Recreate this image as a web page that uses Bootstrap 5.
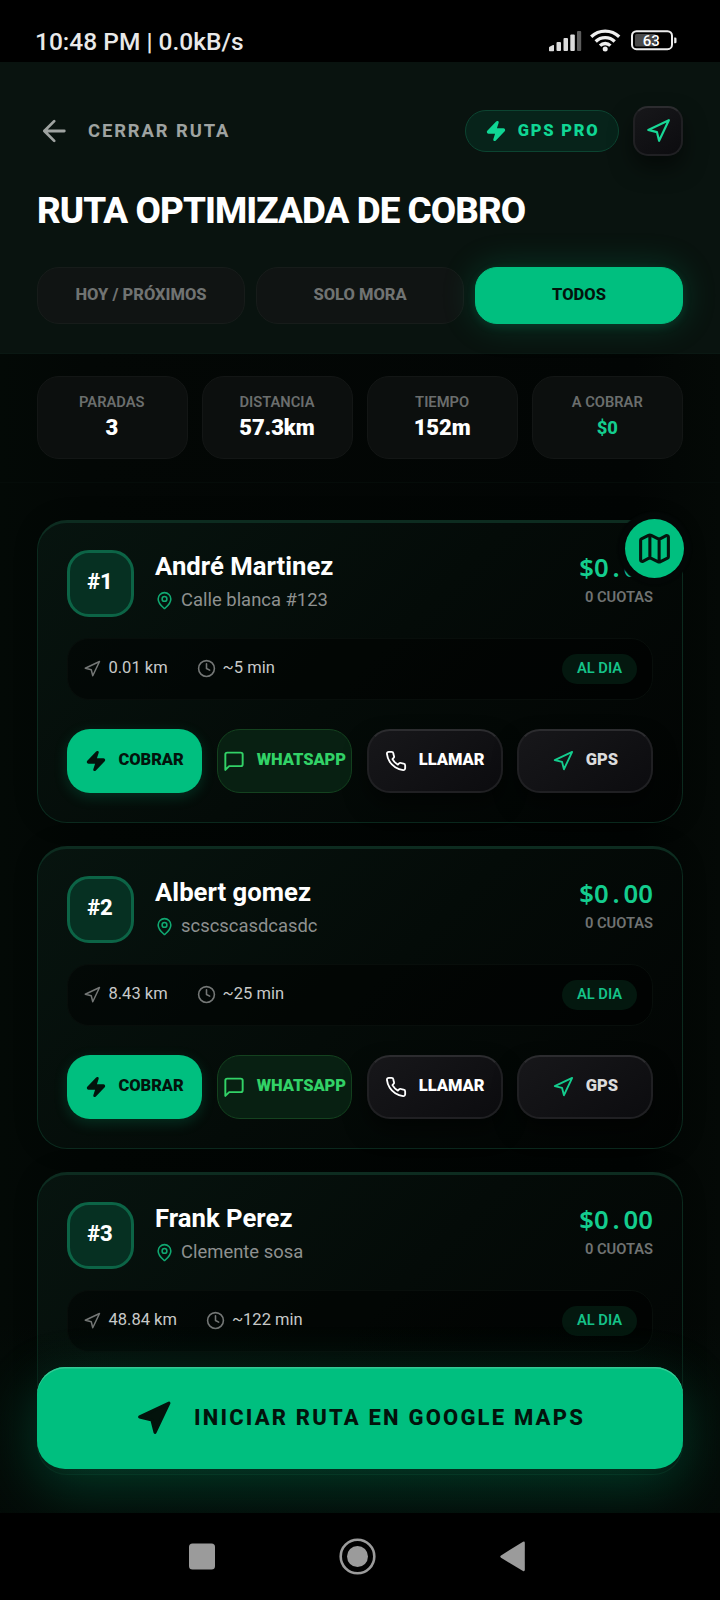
<!DOCTYPE html>
<html lang="es">
<head>
<meta charset="utf-8">
<meta name="viewport" content="width=device-width, initial-scale=1">
<title>Ruta optimizada de cobro</title>
<link rel="stylesheet" href="https://cdn.jsdelivr.net/npm/bootstrap@5.3.0/dist/css/bootstrap.min.css">
<style>
:root{--em:#00bf7f;--em-l:#14cd8e}
html,body{height:1600px}
body{background:#000;color:#fff;font-family:Roboto,"Liberation Sans",sans-serif;line-height:1;overflow:hidden}
svg{display:block;flex:none}
.ico{fill:none;stroke:currentColor;stroke-width:2;stroke-linecap:round;stroke-linejoin:round}
.ico-solid{fill:currentColor}
.statusbar{height:62px;padding:26px 43px 0 35px;font-size:24.5px;font-weight:500;color:#e9e9e9}
.screen{background:linear-gradient(90deg,#030906,#030705 12%,#020504 88%,#040906)}
.route-head{height:292px;padding:44px 37px 0;background:#09130f;border-bottom:1px solid #0a1813}
.back-link{font-size:18.4px;font-weight:700;letter-spacing:1.9px;color:#9fa3a1;padding-left:2px;gap:19px}
.gps-pill{height:42px;width:154px;border:1px solid #0c4431;background:#07231a;color:#10d694;font-size:16.5px;font-weight:900;letter-spacing:1.75px;gap:11px}
.dark-btn{background:linear-gradient(145deg,#17171a,#0c0c0f);border:2px solid #202023;border-top-color:#2c2c2f;box-shadow:0 12px 22px rgba(0,0,0,.5)}
.nav-square{width:50px;height:50px;border-radius:15px;color:#18d796}
.page-title{font-size:36.8px;font-weight:800;letter-spacing:-.93px;margin:33px 0 0;line-height:44px}
.filters{gap:11px;margin-top:34px}
.filter-tab{height:57px;flex:1 1 0;border-radius:22px;border:1px solid #171c1a;background:#101413;color:#707372;font-size:16.5px;font-weight:800;padding-bottom:1px}
.filter-tab.is-on{background:var(--em);border-color:var(--em);color:#03130c;box-shadow:0 0 34px rgba(0,191,127,.22),0 3px 10px rgba(0,191,127,.14)}
.stats{height:129px;padding:22px 37px 0;gap:14.6px;border-bottom:1px solid #050c09}
.stat{height:83px;flex:1 1 0;border-radius:22px;border:1px solid #131615;background:#0c0f0e;padding:17px 1px 0 0}
.stat-label{font-size:14.7px;font-weight:600;color:#6b6e6d;line-height:16px}
.stat-value{font-size:22px;font-weight:900;letter-spacing:-.1px;line-height:26px;margin-top:5px}
.stops{padding:37px 37px 0;gap:23px}
.stop{height:303px;flex:none;border-radius:30px;border:1.5px solid #0b2a1e;border-top:3px solid #0d2c20;background:linear-gradient(135deg,#07140f 0%,#040b08 50%,#020403 100%);padding:27px 29px 0 28.5px;box-shadow:0 0 24px rgba(0,0,0,.2)}
.stop-no{width:67px;height:67px;border-radius:22px;border:3px solid #0c6446;background:#063022;font-size:22px;font-weight:800;padding-bottom:3px}
.stop-name{font-size:25.7px;font-weight:700;line-height:30px;margin-top:1px}
.stop-addr{font-size:18.4px;line-height:24px;color:#8e9190;gap:7px;margin-top:7px}
.stop-addr svg{color:#10a871}
.amount{font-family:"Noto Sans","Open Sans",sans-serif;font-weight:600;font-size:25.7px;line-height:30px;color:var(--em-l);margin-top:3px}
.amount .dot{padding:0 .152em}
.quotas{font-size:14.7px;font-weight:600;line-height:16px;color:#707372;margin-top:6px}
.stop-top{height:67px}
.meta{height:62px;margin-top:21px;border-radius:22px;border:1px solid #080e0b;background:rgba(0,0,0,.45);padding:0 15px 1px 15px;font-size:16.5px;color:#c8cac9}
.meta svg{color:#747776}
.meta .dur{margin-left:29px;gap:7px}
.state-pill{width:75px;height:30px;border-radius:15px;background:#04180f;color:#15c288;font-size:14.7px;font-weight:600;padding-bottom:1px}
.actions{gap:14.6px;margin-top:29px}
.act{height:64px;flex:0 0 calc((100% - 43.8px)/4);border-radius:23px;font-size:16.5px;font-weight:900;letter-spacing:-.05px;gap:11.5px;white-space:nowrap;padding-bottom:1px}
.act-pay{background:var(--em);color:#03130c;box-shadow:0 4px 14px rgba(0,191,127,.2)}
.act-wa{background:#082012;border:1px solid #14421f;color:#32d267}
.map-fab{top:165px;right:36.500px;width:59px;height:59px;background:var(--em);color:#04140d;box-shadow:0 0 1px 7.500px #030706;margin-top:292px}
.cta-wrap{left:0;right:0;bottom:0;height:190px;padding:44px 37px;background:linear-gradient(180deg,rgba(4,12,9,0),rgba(4,14,10,.5) 40%,rgba(4,12,9,.6))}
.cta{height:102px;border-radius:28px;background:var(--em);color:#03130c;font-size:22px;font-weight:800;letter-spacing:2.2px;gap:22px;box-shadow:0 18px 55px rgba(0,191,127,.27),inset 0 1.5px 0 #35c995}
.sysnav{height:87px}
</style>
</head>
<body class="d-flex flex-column">
<svg width="0" height="0" class="position-absolute" aria-hidden="true">
  <symbol id="nav" viewBox="0 0 24 24"><polygon points="3 11 22 2 13 21 11 13 3 11"/></symbol>
  <symbol id="zap" viewBox="0 0 24 24"><path d="M4 14a1 1 0 0 1-.78-1.63l9.9-10.2a.5.5 0 0 1 .86.46l-1.92 6.02A1 1 0 0 0 13 10h7a1 1 0 0 1 .78 1.63l-9.9 10.2a.5.5 0 0 1-.86-.46l1.92-6.02A1 1 0 0 0 11 14z"/></symbol>
  <symbol id="pin" viewBox="0 0 24 24"><path d="M20 10c0 5-5.5 10.200-7.400 11.800a1 1 0 0 1-1.200 0C9.500 20.200 4 15 4 10a8 8 0 0 1 16 0"/><circle cx="12" cy="10" r="3"/></symbol>
  <symbol id="clock" viewBox="0 0 24 24"><circle cx="12" cy="12" r="10"/><path d="M12 6v6l4 2"/></symbol>
  <symbol id="msg" viewBox="0 0 24 24"><path d="M21 15a2 2 0 0 1-2 2H7l-4 4V5a2 2 0 0 1 2-2h14a2 2 0 0 1 2 2z" transform="translate(-.6 -.3) scale(1.05)"/></symbol>
  <symbol id="phone" viewBox="0 0 24 24"><path d="M22 16.920v3a2 2 0 0 1-2.180 2 19.790 19.790 0 0 1-8.630-3.070 19.500 19.500 0 0 1-6-6 19.790 19.790 0 0 1-3.070-8.670A2 2 0 0 1 4.110 2h3a2 2 0 0 1 2 1.720 12.840 12.840 0 0 0 .7 2.810 2 2 0 0 1-.45 2.110L8.090 9.910a16 16 0 0 0 6 6l1.270-1.270a2 2 0 0 1 2.110-.45 12.840 12.840 0 0 0 2.810.7A2 2 0 0 1 22 16.920z"/></symbol>
  <symbol id="map" viewBox="0 0 24 24"><path d="M14.106 5.553a2 2 0 0 0 1.788 0l3.659-1.830A1 1 0 0 1 21 4.619v12.764a1 1 0 0 1-.553.894l-4.553 2.277a2 2 0 0 1-1.788 0l-4.212-2.106a2 2 0 0 0-1.788 0l-3.659 1.830A1 1 0 0 1 3 19.381V6.618a1 1 0 0 1 .553-.894l4.553-2.277a2 2 0 0 1 1.788 0zM15 5.764v15M9 3.236v15"/></symbol>
</svg>

<header class="statusbar d-flex justify-content-between flex-shrink-0">
  <span class="mt-1 text-nowrap">10:48 PM | 0.0kB/s</span>
  <svg width="129" height="28" viewBox="548 26 129 28">
    <g fill="#dcdcdc"><path d="M549 51v-3.500q0-.6 1-1l3-1.500q1-.3 1 .6v5q0 .6-.6.6h-3.800q-.6 0-.6-.6z"/><rect x="556.500" y="42" width="4.500" height="9" rx="1"/><rect x="563.500" y="38" width="4.500" height="13" rx="1"/><rect x="570.300" y="34.500" width="4.500" height="16.500" rx="1"/><rect x="577" y="31" width="4.200" height="20" rx="1" fill="#5d5d5d"/></g>
    <g fill="none" stroke="#f0f0f0" stroke-width="3.300"><path d="M591.200 36.800a20 20 0 0 1 28 0"/><path d="M595.700 41.500a13.500 13.500 0 0 1 19 0"/><path d="M600 45.600a7.500 7.500 0 0 1 10.400 0"/></g>
    <circle cx="605.200" cy="49" r="2.500" fill="#f0f0f0"/>
    <rect x="632" y="31.200" width="40" height="18" rx="4.500" fill="none" stroke="#ececec" stroke-width="2"/>
    <rect x="635" y="34" width="21" height="12.500" rx="1.500" fill="#4a4a4a"/><path d="M674.200 37.500h1q1.300 0 1.300 1.300v3.200q0 1.300-1.300 1.300h-1z" fill="#ececec"/>
    <text x="651.300" y="45.700" text-anchor="middle" font-size="15" font-weight="500" fill="#fff">63</text>
  </svg>
</header>

<main class="screen flex-grow-1 position-relative overflow-hidden d-flex flex-column">
  <section class="route-head flex-shrink-0">
    <div class="d-flex align-items-center justify-content-between">
      <a class="back-link d-flex align-items-center text-decoration-none">
        <svg width="30" height="30" viewBox="0 0 24 24" class="ico"><path d="m11.500 2.700-9.300 9.300 9.300 9.300M21 12H2.200" transform="translate(2.400 1.800) scale(.85)" stroke-width="2.600"/></svg>
        <span>CERRAR RUTA</span>
      </a>
      <div class="d-flex align-items-center" style="gap:14px">
        <span class="gps-pill rounded-pill d-flex align-items-center justify-content-center"><svg width="22" height="22" class="ico ico-solid"><use href="#zap"/></svg><span>GPS PRO</span></span>
        <button class="nav-square dark-btn d-flex align-items-center justify-content-center p-0"><svg width="26" height="26" class="ico"><use href="#nav"/></svg></button>
      </div>
    </div>
    <h1 class="page-title text-nowrap">RUTA OPTIMIZADA DE COBRO</h1>
    <div class="filters d-flex">
      <div class="filter-tab d-flex align-items-center justify-content-center">HOY / PRÓXIMOS</div>
      <div class="filter-tab d-flex align-items-center justify-content-center">SOLO MORA</div>
      <div class="filter-tab is-on d-flex align-items-center justify-content-center">TODOS</div>
    </div>
  </section>

  <section class="stats d-flex flex-shrink-0 text-center">
    <div class="stat"><div class="stat-label">PARADAS</div><div class="stat-value">3</div></div>
    <div class="stat"><div class="stat-label">DISTANCIA</div><div class="stat-value">57.3km</div></div>
    <div class="stat"><div class="stat-label">TIEMPO</div><div class="stat-value">152m</div></div>
    <div class="stat"><div class="stat-label">A COBRAR</div><div class="stat-value" style="font-size:18.4px;font-weight:800;color:var(--em-l)">$0</div></div>
  </section>

  <section class="stops d-flex flex-column">
    <article class="stop">
      <div class="stop-top d-flex">
        <div class="stop-no d-flex align-items-center justify-content-center">#1</div>
        <div class="flex-grow-1" style="padding-left:21.600px">
          <div class="stop-name">André Martinez</div>
          <div class="stop-addr d-flex align-items-center"><svg width="19" height="19" class="ico"><use href="#pin"/></svg><span>Calle blanca #123</span></div>
        </div>
        <div class="text-end"><div class="amount">$0<span class="dot">.</span>00</div><div class="quotas">0 CUOTAS</div></div>
      </div>
      <div class="meta d-flex align-items-center">
        <svg width="18" height="18" class="ico me-2"><use href="#nav"/></svg><span>0.01 km</span>
        <span class="dur d-flex align-items-center"><svg width="19" height="19" class="ico"><use href="#clock"/></svg><span>~5 min</span></span>
        <span class="state-pill ms-auto d-flex align-items-center justify-content-center">AL DIA</span>
      </div>
      <div class="actions d-flex">
        <div class="act act-pay d-flex align-items-center justify-content-center"><svg width="22" height="22" class="ico ico-solid"><use href="#zap"/></svg>COBRAR</div>
        <div class="act act-wa d-flex align-items-center justify-content-center"><svg width="22" height="22" class="ico"><use href="#msg"/></svg>WHATSAPP</div>
        <div class="act dark-btn d-flex align-items-center justify-content-center"><svg width="22" height="22" class="ico"><use href="#phone"/></svg>LLAMAR</div>
        <div class="act dark-btn d-flex align-items-center justify-content-center"><svg width="22" height="22" class="ico" color="#14cd8e"><use href="#nav"/></svg><span style="color:#dcdcdc">GPS</span></div>
      </div>
    </article>

    <article class="stop">
      <div class="stop-top d-flex">
        <div class="stop-no d-flex align-items-center justify-content-center">#2</div>
        <div class="flex-grow-1" style="padding-left:21.600px">
          <div class="stop-name">Albert gomez</div>
          <div class="stop-addr d-flex align-items-center"><svg width="19" height="19" class="ico"><use href="#pin"/></svg><span>scscscasdcasdc</span></div>
        </div>
        <div class="text-end"><div class="amount">$0<span class="dot">.</span>00</div><div class="quotas">0 CUOTAS</div></div>
      </div>
      <div class="meta d-flex align-items-center">
        <svg width="18" height="18" class="ico me-2"><use href="#nav"/></svg><span>8.43 km</span>
        <span class="dur d-flex align-items-center"><svg width="19" height="19" class="ico"><use href="#clock"/></svg><span>~25 min</span></span>
        <span class="state-pill ms-auto d-flex align-items-center justify-content-center">AL DIA</span>
      </div>
      <div class="actions d-flex">
        <div class="act act-pay d-flex align-items-center justify-content-center"><svg width="22" height="22" class="ico ico-solid"><use href="#zap"/></svg>COBRAR</div>
        <div class="act act-wa d-flex align-items-center justify-content-center"><svg width="22" height="22" class="ico"><use href="#msg"/></svg>WHATSAPP</div>
        <div class="act dark-btn d-flex align-items-center justify-content-center"><svg width="22" height="22" class="ico"><use href="#phone"/></svg>LLAMAR</div>
        <div class="act dark-btn d-flex align-items-center justify-content-center"><svg width="22" height="22" class="ico" color="#14cd8e"><use href="#nav"/></svg><span style="color:#dcdcdc">GPS</span></div>
      </div>
    </article>

    <article class="stop">
      <div class="stop-top d-flex">
        <div class="stop-no d-flex align-items-center justify-content-center">#3</div>
        <div class="flex-grow-1" style="padding-left:21.600px">
          <div class="stop-name">Frank Perez</div>
          <div class="stop-addr d-flex align-items-center"><svg width="19" height="19" class="ico"><use href="#pin"/></svg><span>Clemente sosa</span></div>
        </div>
        <div class="text-end"><div class="amount">$0<span class="dot">.</span>00</div><div class="quotas">0 CUOTAS</div></div>
      </div>
      <div class="meta d-flex align-items-center">
        <svg width="18" height="18" class="ico me-2"><use href="#nav"/></svg><span>48.84 km</span>
        <span class="dur d-flex align-items-center"><svg width="19" height="19" class="ico"><use href="#clock"/></svg><span>~122 min</span></span>
        <span class="state-pill ms-auto d-flex align-items-center justify-content-center">AL DIA</span>
      </div>
    </article>
  </section>

  <button class="map-fab position-absolute rounded-circle border-0 d-flex align-items-center justify-content-center p-0"><svg width="37" height="37" class="ico"><use href="#map"/></svg></button>

  <div class="cta-wrap position-absolute">
    <div class="cta d-flex align-items-center justify-content-center"><svg width="37" height="37" class="ico ico-solid"><use href="#nav"/></svg><span class="text-nowrap">INICIAR RUTA EN GOOGLE MAPS</span></div>
  </div>
</main>

<footer class="sysnav flex-shrink-0 d-flex justify-content-center" style="padding-right:4px">
  <svg width="340" height="87" viewBox="188 1513 340 87" fill="#9b9b9b"><rect x="189" y="1543.500" width="26" height="26" rx="3.500"/><circle cx="357.500" cy="1556.500" r="16.800" fill="none" stroke="#9b9b9b" stroke-width="2.600"/><circle cx="357.500" cy="1556.500" r="10.500"/><path d="M523 1541.800q1.800-.8 1.800 1v27q0 2-1.800 1.200l-22-13.200q-1.500-1.200 0-2.400z"/></svg>
</footer>
<script src="https://cdn.jsdelivr.net/npm/bootstrap@5.3.0/dist/js/bootstrap.bundle.min.js"></script>
</body>
</html>
